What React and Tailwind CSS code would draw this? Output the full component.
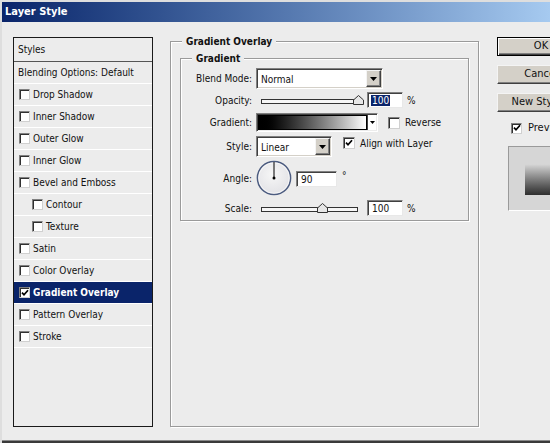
import React from 'react';

const styleItems = [
  { label: 'Drop Shadow' },
  { label: 'Inner Shadow' },
  { label: 'Outer Glow' },
  { label: 'Inner Glow' },
  { label: 'Bevel and Emboss' },
  { label: 'Contour', indent: true },
  { label: 'Texture', indent: true },
  { label: 'Satin' },
  { label: 'Color Overlay' },
  { label: 'Gradient Overlay', checked: true, active: true },
  { label: 'Pattern Overlay' },
  { label: 'Stroke' },
];

function Tick() {
  return (
    <svg width="8" height="8" viewBox="0 0 8 8" className="block">
      <path d="M1 3.6 L3 5.8 L7 1.2" fill="none" stroke="#000" strokeWidth="1.7" />
    </svg>
  );
}

function CheckBox({ checked, big }) {
  return (
    <span
      className={`${big ? 'w-[12px] h-[12px]' : 'w-[11px] h-[11px]'} shrink-0 bg-white border border-[#808080] border-b-[#d0d0d0] border-r-[#d0d0d0] shadow-[inset_1px_1px_0_#303030] flex items-center justify-center`}
    >
      {checked && <Tick />}
    </span>
  );
}

function DownArrow() {
  return (
    <svg width="7" height="4" viewBox="0 0 7 4" className="block">
      <path d="M0 0H7L3.5 4Z" fill="#000" />
    </svg>
  );
}

function Select({ value, width }) {
  return (
    <div className={`${width} h-[21px] bg-white border border-[#808080] border-b-white border-r-white shadow-[inset_1px_1px_0_#404040,inset_-1px_-1px_0_#d4d0c8] flex items-center p-[1px]`}>
      <span className="flex-1 pl-[3px] pt-[1px]">{value}</span>
      <span className="w-[15px] h-full bg-[#d4d0c8] border border-[#f4f4f4] border-b-[#404040] border-r-[#404040] shadow-[inset_-1px_-1px_0_#808080] flex items-center justify-center">
        <DownArrow />
      </span>
    </div>
  );
}

function Field({ value, width, selected, className = '' }) {
  return (
    <div className={`${width} h-[16px] bg-white border border-[#808080] border-b-[#e8e8e8] border-r-[#e8e8e8] shadow-[inset_1px_1px_0_#404040] pl-[4px] flex items-center ${className}`}>
      <span className={selected ? 'bg-[#0a246a] text-white leading-[11px] px-[1px] -ml-[1px]' : ''}>{value}</span>
    </div>
  );
}

function Slider({ thumb }) {
  return (
    <div className="relative ml-[5px] w-[97px] h-[10px] flex items-end pb-[1px]">
      <div className="w-full h-[5px] border border-[#333] bg-[#f6f6f6]" />
      <svg className={`absolute top-0 ${thumb}`} width="11" height="10" viewBox="0 0 11 10">
        <path d="M5.5 0.5 L10.5 5 V9.5 H0.5 V5 Z" fill="#e6e6e6" stroke="#333" />
      </svg>
    </div>
  );
}

function Dial() {
  return (
    <svg width="36" height="36" viewBox="0 0 36 36" className="block">
      <defs>
        <radialGradient id="dialFill" cx="0.45" cy="0.4" r="0.6">
          <stop offset="0" stopColor="#f6f6f6" />
          <stop offset="1" stopColor="#e2e2e6" />
        </radialGradient>
      </defs>
      <circle cx="18" cy="18" r="16.6" fill="url(#dialFill)" stroke="#4c5c80" strokeWidth="1.5" />
      <circle cx="18" cy="18" r="15.3" fill="none" stroke="#ffffff" strokeWidth="0.8" opacity="0.8" />
      <line x1="18" y1="18" x2="18" y2="2" stroke="#000" strokeWidth="1" />
      <circle cx="18" cy="18" r="1.5" fill="#000" />
    </svg>
  );
}

function Label({ children }) {
  return <span className="w-[71px] shrink-0 text-right mr-[4px]">{children}</span>;
}

function Button({ children, primary, className = '' }) {
  return (
    <div
      className={`w-[88px] h-[19px] bg-[#d4d0c8] flex items-center justify-center text-[11px] ${
        primary
          ? 'border border-black shadow-[inset_1px_1px_0_#ffffff,inset_-1px_-1px_0_#404040,inset_-2px_-2px_0_#808080]'
          : 'border border-[#f4f4f4] border-b-[#404040] border-r-[#404040] shadow-[inset_-1px_-1px_0_#808080]'
      } ${className}`}
    >
      {children}
    </div>
  );
}

export default function App() {
  return (
    <div className="w-[550px] h-[443px] overflow-hidden flex flex-col bg-[#ececec] border-t-2 border-l-2 border-[#dedede] text-[10px] text-[#111] font-['DejaVu_Sans_Condensed','Liberation_Sans',sans-serif]">
      {/* title bar */}
      <div className="h-[20px] shrink-0 bg-gradient-to-r from-[#0a246a] to-[#a6caf0] flex items-center pl-[3px] text-white font-bold text-[11px]">
        Layer Style
      </div>

      {/* body */}
      <div className="h-[418px] shrink-0 flex items-start pl-[11px]">
        {/* styles list */}
        <div className="mt-[15px] w-[140px] h-[390px] shrink-0 border border-[#1a1a1a] flex flex-col">
          <div className="h-[24px] border-b border-[#555] flex items-center pl-[4px]">Styles</div>
          <div className="h-[22px] border-b border-white flex items-center pl-[4px]">Blending Options: Default</div>
          {styleItems.map((it) => (
            <div
              key={it.label}
              className={`h-[22px] border-b border-white flex items-center gap-[3px] ${it.indent ? 'pl-[18px]' : 'pl-[5px]'} ${
                it.active ? 'bg-[#0a246a] text-white font-bold' : ''
              }`}
            >
              <CheckBox checked={it.checked} />
              <span>{it.label}</span>
            </div>
          ))}
        </div>

        {/* gradient overlay group */}
        <fieldset className="ml-[17px] mt-[13px] w-[309px] h-[392px] shrink-0 border border-[#9a9a9a] shadow-[inset_1px_1px_0_#ffffff,1px_1px_0_#ffffff] px-[9px] pt-[4px]">
          <legend className="ml-[2px] px-[4px] font-bold leading-[13px] bg-[#ececec]">Gradient Overlay</legend>

          <fieldset className="w-[289px] border border-[#9a9a9a] shadow-[inset_1px_1px_0_#ffffff,1px_1px_0_#ffffff] pb-[4px] flex flex-col">
            <legend className="ml-[11px] px-[4px] font-bold leading-[13px] bg-[#ececec]">Gradient</legend>

            <div className="mt-[3px] h-[21px] flex items-center">
              <Label>Blend Mode:</Label>
              <Select value="Normal" width="w-[127px]" />
            </div>

            <div className="mt-[3px] h-[16px] flex items-center">
              <Label>Opacity:</Label>
              <Slider thumb="left-[92px]" />
              <Field value="100" width="w-[36px]" selected className="ml-[9px]" />
              <span className="ml-[4px]">%</span>
            </div>

            <div className="mt-[5px] h-[19px] flex items-center">
              <Label>Gradient:</Label>
              <div className="w-[122px] h-[19px] border border-[#808080] border-b-white border-r-white shadow-[inset_1px_1px_0_#404040] p-[1px] flex">
                <div className="flex-1 border border-black bg-gradient-to-r from-black to-white" />
                <div className="w-[9px] bg-white border-l border-[#404040] flex items-center justify-center">
                  <svg width="5" height="3" viewBox="0 0 5 3" className="block">
                    <path d="M0 0H5L2.5 3Z" fill="#000" />
                  </svg>
                </div>
              </div>
              <span className="ml-[10px]">
                <CheckBox big />
              </span>
              <span className="ml-[5px]">Reverse</span>
            </div>

            <div className="mt-[4px] h-[21px] flex items-start">
              <span className="self-center flex">
                <Label>Style:</Label>
              </span>
              <Select value="Linear" width="w-[76px]" />
              <span className="ml-[11px] mt-[1px]">
                <CheckBox checked big />
              </span>
              <span className="ml-[5px]">Align with Layer</span>
            </div>

            <div className="mt-[3px] h-[36px] flex items-start">
              <span className="self-center flex">
                <Label>Angle:</Label>
              </span>
              <Dial />
              <Field value="90" width="w-[41px]" className="ml-[4px] mt-[11px]" />
              <span className="ml-[5px] mt-[8px]">°</span>
            </div>

            <div className="mt-[4px] h-[16px] flex items-center">
              <Label>Scale:</Label>
              <Slider thumb="left-[56px]" />
              <Field value="100" width="w-[36px]" className="ml-[9px]" />
              <span className="ml-[4px]">%</span>
            </div>
          </fieldset>
        </fieldset>

        {/* buttons */}
        <div className="ml-[18px] mt-[15px] w-[100px] shrink-0 flex flex-col">
          <Button primary>OK</Button>
          <Button className="mt-[9px]">Cancel</Button>
          <Button className="mt-[9px]">New Style...</Button>
          <div className="mt-[8px] ml-[14px] flex items-center gap-[6px] text-[11px]">
            <CheckBox checked />
            <span>Preview</span>
          </div>
          <div className="mt-[9px] ml-[11px] w-[66px] h-[65px] bg-[#d6d6d6] border border-[#9a9a9a] border-b-white border-r-white flex items-center justify-center">
            <div className="w-[32px] h-[31px] bg-gradient-to-b from-[#d8d8d8] to-[#2e2e2e] mt-[2px]" />
          </div>
        </div>
      </div>

      <div className="h-[1px] shrink-0 bg-[#8a8a8a]" />
      <div className="h-[2px] shrink-0 bg-[#3a3a3a]" />
    </div>
  );
}
